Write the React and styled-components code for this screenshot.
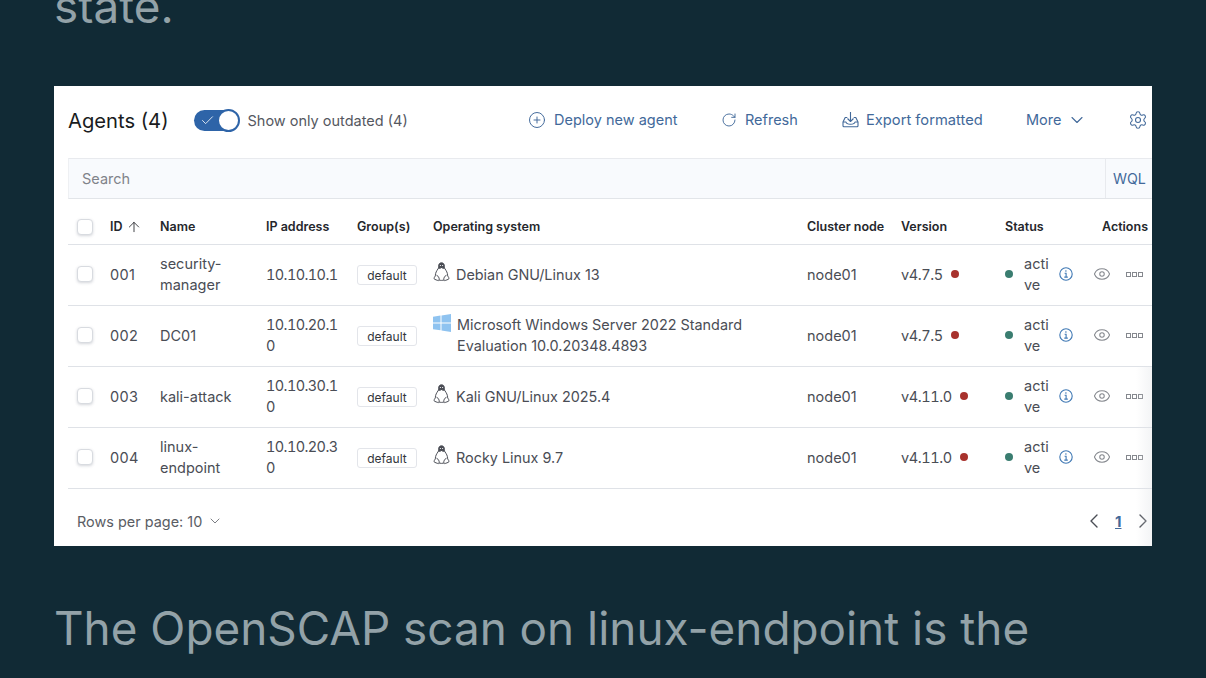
import React from 'react';
import styled, { createGlobalStyle } from 'styled-components';
import { ChevronDown, ChevronLeft, ChevronRight, CirclePlus, Eye, ArrowUp, Check, RotateCw, Settings } from 'lucide-react';

const agents = [
    { id: '001', name: ['security-', 'manager'], ip: ['10.10.10.1'], os: ['Debian GNU/Linux 13'], kind: 'linux', version: 'v4.7.5' },
    { id: '002', name: ['DC01'], ip: ['10.10.20.1', '0'], os: ['Microsoft Windows Server 2022 Standard', 'Evaluation 10.0.20348.4893'], kind: 'windows', version: 'v4.7.5' },
    { id: '003', name: ['kali-attack'], ip: ['10.10.30.1', '0'], os: ['Kali GNU/Linux 2025.4'], kind: 'linux', version: 'v4.11.0' },
    { id: '004', name: ['linux-', 'endpoint'], ip: ['10.10.20.3', '0'], os: ['Rocky Linux 9.7'], kind: 'linux', version: 'v4.11.0' },
];

const colours = {
    page: '#112a35',
    prose: '#93a2a8',
    ink: '#25272c',
    body: '#4a4d55',
    link: '#42699a',
    line: '#dfe2e7',
    green: '#3a7d70',
    red: '#a8322d',
};

const GlobalStyle = createGlobalStyle`
    html, body {
        margin: 0;
        height: 100%;
        overflow: hidden;
        background: ${colours.page};
        font-family: Inter, "Liberation Sans", sans-serif;
    }
`;

const Page = styled.main`
    height: 678px;
    padding: 0 54px;
    overflow: hidden;
    box-sizing: border-box;
`;

const Prose = styled.p`
    margin: ${p => p.$top}px 0 0 0;
    font-size: 45.85px;
    line-height: 56px;
    color: ${colours.prose};
    white-space: nowrap;
`;

const Panel = styled.section`
    position: relative;
    width: 1098px;
    height: 460px;
    margin-top: 51px;
    padding: 14px 0 0 14px;
    box-sizing: border-box;
    background: #fff;
    overflow: hidden;
    &:after {
        content: '';
        position: absolute;
        top: 280px;
        right: 0;
        bottom: 0;
        width: 16px;
        background: linear-gradient(to right, rgba(225, 228, 232, 0), rgba(225, 228, 232, 0.4));
    }
`;

const Toolbar = styled.header`
    display: flex;
    align-items: center;
    height: 40px;
    white-space: nowrap;
`;

const Title = styled.h2`
    margin: 0 25px 0 0;
    font-size: 20.2px;
    font-weight: 400;
    color: #1a1c21;
`;

const Switch = styled.span`
    position: relative;
    display: flex;
    align-items: center;
    width: 45px;
    height: 21px;
    padding-left: 6px;
    box-sizing: border-box;
    border-radius: 11px;
    background: #2e64a8;
    color: #fff;
    &:after {
        content: '';
        position: absolute;
        top: -1px;
        right: -1px;
        width: 19px;
        height: 19px;
        border: 2px solid #2e64a8;
        border-radius: 50%;
        background: #fff;
    }
`;

const SwitchLabel = styled.span`
    margin-left: 9px;
    font-size: 14.5px;
    color: #55585f;
`;

const Action = styled.a`
    position: absolute;
    top: 24px;
    left: ${p => p.$x}px;
    display: flex;
    align-items: center;
    height: 19px;
    gap: ${p => p.$gap || 9}px;
    font-size: ${p => p.$size || 14.5}px;
    color: ${colours.link};
    svg {
        flex: none;
    }
`;

const SearchBar = styled.div`
    display: flex;
    height: 41px;
    margin-top: 18px;
    box-sizing: border-box;
    background: #f8fafd;
    border-top: 1px solid #e8eaee;
    border-bottom: 1px solid #e2e5e9;
    border-left: 1px solid #eef0f3;
    font-size: 14.5px;
`;

const SearchInput = styled.div`
    flex: 1;
    display: flex;
    align-items: center;
    padding-left: 13px;
    color: #80838a;
`;

const Wql = styled.div`
    width: 47px;
    display: flex;
    align-items: center;
    padding-left: 7px;
    box-sizing: border-box;
    border-left: 1px solid #e8eaee;
    font-size: 14.2px;
    color: ${colours.link};
`;

const Row = styled.div`
    display: grid;
    grid-template-columns: 42px 50px 106px 91px 76px 374px 94px 104px 97px 64px;
    align-items: center;
    height: ${p => p.$height}px;
    box-sizing: border-box;
    padding-bottom: ${p => p.$lift || 0}px;
    border-bottom: 1px solid ${colours.line};
`;

const HeadCell = styled.div`
    display: flex;
    align-items: center;
    gap: 3px;
    padding-top: 10px;
    font-size: 12.5px;
    font-weight: 600;
    color: ${colours.ink};
    white-space: nowrap;
`;

const Cell = styled.div`
    font-size: 14.5px;
    line-height: 21px;
    color: ${colours.body};
    white-space: nowrap;
`;

const IdCell = styled(Cell)`
    letter-spacing: 0.3px;
`;

const IpCell = styled(Cell)`
    font-variant-numeric: tabular-nums;
    letter-spacing: -0.6px;
`;

const CheckBox = styled.span`
    display: block;
    width: 16px;
    height: 16px;
    margin-left: 9px;
    box-sizing: border-box;
    border: 1px solid #d8dbe0;
    border-radius: 4px;
    background: #fff;
    box-shadow: 0 1px 3px rgba(60, 70, 90, 0.22);
`;

const Badge = styled.span`
    display: block;
    width: 60px;
    height: 20px;
    margin-top: 2px;
    line-height: 19px;
    text-align: center;
    box-sizing: border-box;
    border: 1px solid #e3e5ea;
    border-radius: 3px;
    font-size: 12px;
    color: #33363c;
`;

const OsCell = styled(Cell)`
    display: flex;
    align-items: flex-start;
    gap: 6px;
    font-size: 14.4px;
`;

const OsIcon = styled.svg`
    flex: none;
    margin-top: ${p => p.$top}px;
`;

const VersionCell = styled(Cell)`
    display: flex;
    align-items: center;
    gap: 8px;
    font-variant-numeric: tabular-nums;
    letter-spacing: -0.4px;
`;

const Dot = styled.span`
    width: 8px;
    height: 8px;
    border-radius: 50%;
    background: ${p => p.$colour};
`;

const StatusCell = styled(Cell)`
    display: grid;
    grid-template-columns: 19px 35px 20px;
    align-items: center;
`;

const ActionsCell = styled.div`
    display: flex;
    align-items: center;
    gap: 15px;
    margin-left: -9px;
    color: #85888e;
`;

const Dots = styled.span`
    display: flex;
    gap: 1px;
    i {
        width: 3px;
        height: 3px;
        border: 1px solid #85888e;
    }
`;

const Footer = styled.footer`
    display: flex;
    align-items: center;
    justify-content: space-between;
    height: 64px;
    padding-left: 9px;
    font-size: 14.45px;
    color: #5a5d64;
`;

const Rows = styled.div`
    display: flex;
    align-items: center;
    gap: 5px;
`;

const Pager = styled.div`
    display: flex;
    align-items: center;
    gap: 9.5px;
    margin-right: -3px;
    color: #4a4d55;
`;

const Current = styled.b`
    font-size: 15px;
    color: ${colours.link};
    text-decoration: underline;
`;

const Penguin = () => (
    <OsIcon $top={-2} width="17" height="20" viewBox="0 0 17 20" fill="none" stroke="#4a4d55" strokeWidth="1">
        <path d="M8.500 .8c-2 0-2.900 1.500-2.800 3.400 0 .8-.1 1.400-.3 2h6.200c-.2-.6-.3-1.200-.3-2 .1-1.900-.8-3.400-2.800-3.400z" fill="#4a4d55" />
        <path d="M5.400 6.200c-.4.900-.9 1.500-1.500 2.400C2.900 10.200 2.100 12.500 2.400 14.500" />
        <path d="M11.600 6.200c.4.900.9 1.500 1.500 2.400 1 1.600 1.800 3.900 1.500 5.900" />
        <path d="M6.700 5.500c1 .8 2.600.8 3.600 0L8.500 7.200z" fill="#fff" stroke="none" />
        <path d="M2.400 14c-1 1-1.500 2.100-1.300 2.800.8.900 3 1.300 4.200 1.900.8-.5 1-1.500.8-2.500-.5-1.500-1.800-2.900-2.600-3" fill="#fff" />
        <path d="M14.600 14c1 1 1.500 2.100 1.300 2.800-.8.900-3 1.300-4.200 1.900-.8-.5-1-1.500-.8-2.500.5-1.500 1.800-2.900 2.600-3" fill="#fff" />
        <path d="M6 18c1.500.5 3.500.5 5 0" />
        <circle cx="7.400" cy="3.500" r=".6" fill="#fff" stroke="none" />
        <circle cx="9.600" cy="3.500" r=".6" fill="#fff" stroke="none" />
    </OsIcon>
);

const WindowsLogo = () => (
    <OsIcon $top={0} width="18" height="18" viewBox="0 0 18 18" fill="#8fc3f0">
        <polygon points="0,2.700 7.500,1.600 7.500,8.400 0,8.400" />
        <polygon points="8.500,1.400 18,0 18,8.400 8.500,8.400" />
        <polygon points="0,9.400 7.500,9.400 7.500,16.300 0,15.200" />
        <polygon points="8.500,9.400 18,9.400 18,18 8.500,16.500" />
    </OsIcon>
);

const ExportIcon = () => (
    <svg width="17" height="17" viewBox="0 0 17 17" fill="none" stroke="currentColor" strokeWidth="1.1" strokeLinejoin="round">
        <path d="M5.300 6.500H3.200L1 11v3.700c0 .6.400 1 1 1h13c.6 0 1-.4 1-1V11l-2.200-4.500h-2.100" />
        <path d="M1 11h3c.3 1.500 1.700 2.200 4.500 2.200s4.200-.7 4.500-2.200h3" />
        <path d="M8.500 1v9.500M5.500 7.500l3 3 3-3" />
    </svg>
);

const InfoIcon = () => (
    <svg width="14" height="14" viewBox="0 0 14 14" fill="none" stroke="#3f78b4" strokeWidth="1.1">
        <circle cx="7" cy="7" r="6.200" />
        <path d="M5.600 6.200h1.500v3.800M5.300 10.100h3.500" />
        <circle cx="6.900" cy="4" r=".8" fill="#3f78b4" stroke="none" />
    </svg>
);

const AgentRow = ({ agent }) => (
    <Row $height={61} $lift={2}>
        <CheckBox />
        <IdCell>{agent.id}</IdCell>
        <Cell>
            {agent.name.map(line => (
                <div key={line}>{line}</div>
            ))}
        </Cell>
        <IpCell>
            {agent.ip.map(line => (
                <div key={line}>{line}</div>
            ))}
        </IpCell>
        <Cell>
            <Badge>default</Badge>
        </Cell>
        <OsCell>
            {agent.kind === 'windows' ? <WindowsLogo /> : <Penguin />}
            <div>
                {agent.os.map(line => (
                    <div key={line}>{line}</div>
                ))}
            </div>
        </OsCell>
        <Cell>node01</Cell>
        <VersionCell>
            {agent.version}
            <Dot $colour={colours.red} />
        </VersionCell>
        <StatusCell>
            <Dot $colour={colours.green} />
            <div>
                <div>acti</div>
                <div>ve</div>
            </div>
            <InfoIcon />
        </StatusCell>
        <ActionsCell>
            <Eye size={18} strokeWidth={1.4} />
            <Dots>
                <i />
                <i />
                <i />
            </Dots>
        </ActionsCell>
    </Row>
);

const App = () => (
    <Page>
        <GlobalStyle />
        <Prose $top={-21}>state.</Prose>
        <Panel>
            <Toolbar>
                <Title>Agents (4)</Title>
                <Switch>
                    <Check size={15} strokeWidth={1.3} />
                </Switch>
                <SwitchLabel>Show only outdated (4)</SwitchLabel>
                <Action $x={474} $gap={8}>
                    <CirclePlus size={18} strokeWidth={1.3} />
                    Deploy new agent
                </Action>
                <Action $x={667} $gap={8}>
                    <RotateCw size={16} strokeWidth={1.4} />
                    Refresh
                </Action>
                <Action $x={788} $gap={7} $size={14.7}>
                    <ExportIcon />
                    Export formatted
                </Action>
                <Action $x={972} $gap={6}>
                    More
                    <ChevronDown size={20} strokeWidth={1.3} />
                </Action>
                <Action $x={1074}>
                    <Settings size={20} strokeWidth={1.3} />
                </Action>
            </Toolbar>
            <SearchBar>
                <SearchInput>Search</SearchInput>
                <Wql>WQL</Wql>
            </SearchBar>
            <Row $height={46}>
                <HeadCell>
                    <CheckBox />
                </HeadCell>
                <HeadCell>
                    ID
                    <ArrowUp size={16} strokeWidth={1.3} />
                </HeadCell>
                <HeadCell>Name</HeadCell>
                <HeadCell>IP address</HeadCell>
                <HeadCell>Group(s)</HeadCell>
                <HeadCell>Operating system</HeadCell>
                <HeadCell>Cluster node</HeadCell>
                <HeadCell>Version</HeadCell>
                <HeadCell>Status</HeadCell>
                <HeadCell>Actions</HeadCell>
            </Row>
            {agents.map(agent => (
                <AgentRow key={agent.id} agent={agent} />
            ))}
            <Footer>
                <Rows>
                    Rows per page: 10
                    <ChevronDown size={16} strokeWidth={1.2} />
                </Rows>
                <Pager>
                    <ChevronLeft size={24} strokeWidth={1.4} />
                    <Current>1</Current>
                    <ChevronRight size={24} strokeWidth={1.4} />
                </Pager>
            </Footer>
        </Panel>
        <Prose $top={55}>The OpenSCAP scan on linux-endpoint is the</Prose>
    </Page>
);

export default App;
